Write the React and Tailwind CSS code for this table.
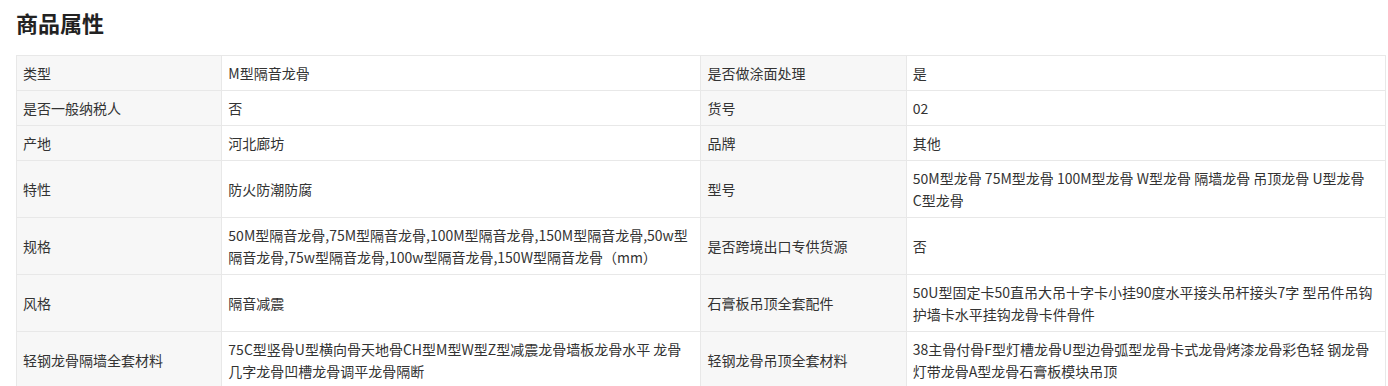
import React from "react";

const rows = [
  ["类型", "M型隔音龙骨", "是否做涂面处理", "是"],
  ["是否一般纳税人", "否", "货号", "02"],
  ["产地", "河北廊坊", "品牌", "其他"],
  ["特性", "防火防潮防腐", "型号", "50M型龙骨 75M型龙骨 100M型龙骨 W型龙骨 隔墙龙骨 吊顶龙骨 U型龙骨\nC型龙骨"],
  ["规格", "50M型隔音龙骨,75M型隔音龙骨,100M型隔音龙骨,150M型隔音龙骨,50w型\n隔音龙骨,75w型隔音龙骨,100w型隔音龙骨,150W型隔音龙骨（mm）", "是否跨境出口专供货源", "否"],
  ["风格", "隔音减震", "石膏板吊顶全套配件", "50U型固定卡50直吊大吊十字卡小挂90度水平接头吊杆接头7字 型吊件吊钩\n护墙卡水平挂钩龙骨卡件骨件"],
  ["轻钢龙骨隔墙全套材料", "75C型竖骨U型横向骨天地骨CH型M型W型Z型减震龙骨墙板龙骨水平 龙骨\n几字龙骨凹槽龙骨调平龙骨隔断", "轻钢龙骨吊顶全套材料", "38主骨付骨F型灯槽龙骨U型边骨弧型龙骨卡式龙骨烤漆龙骨彩色轻 钢龙骨\n灯带龙骨A型龙骨石膏板模块吊顶"],
];

function Lines({ text }) {
  return text.split("\n").map((l, i) => (
    <span key={i} className="block whitespace-nowrap">
      {l}
    </span>
  ));
}

export default function App() {
  return (
    <div
      className="bg-white pl-4 text-[#333]"
      style={{ fontFamily: '"Microsoft YaHei", "Noto Sans CJK SC", "Noto Sans", sans-serif' }}
    >
      <h2 className="pt-[6px] text-[22px] font-bold leading-[32px] text-[#222]">商品属性</h2>
      <table className="mt-[17px] w-[1370px] table-fixed border-collapse text-[14px] leading-[22px]">
        <colgroup>
          <col className="w-[15%]" />
          <col className="w-[35%]" />
          <col className="w-[15%]" />
          <col className="w-[35%]" />
        </colgroup>
        <tbody>
          {rows.map((r, i) => (
            <tr key={i}>
              <td className="border border-[#e8e8e8] bg-[#f7f7f7] px-[6px] py-[6px] align-middle">
                <Lines text={r[0]} />
              </td>
              <td className="border border-[#e8e8e8] bg-white px-[6px] py-[6px] align-middle">
                <Lines text={r[1]} />
              </td>
              <td className="border border-[#e8e8e8] bg-[#f7f7f7] px-[6px] py-[6px] align-middle">
                <Lines text={r[2]} />
              </td>
              <td className="border border-[#e8e8e8] bg-white px-[6px] py-[6px] align-middle">
                <Lines text={r[3]} />
              </td>
            </tr>
          ))}
        </tbody>
      </table>
    </div>
  );
}
